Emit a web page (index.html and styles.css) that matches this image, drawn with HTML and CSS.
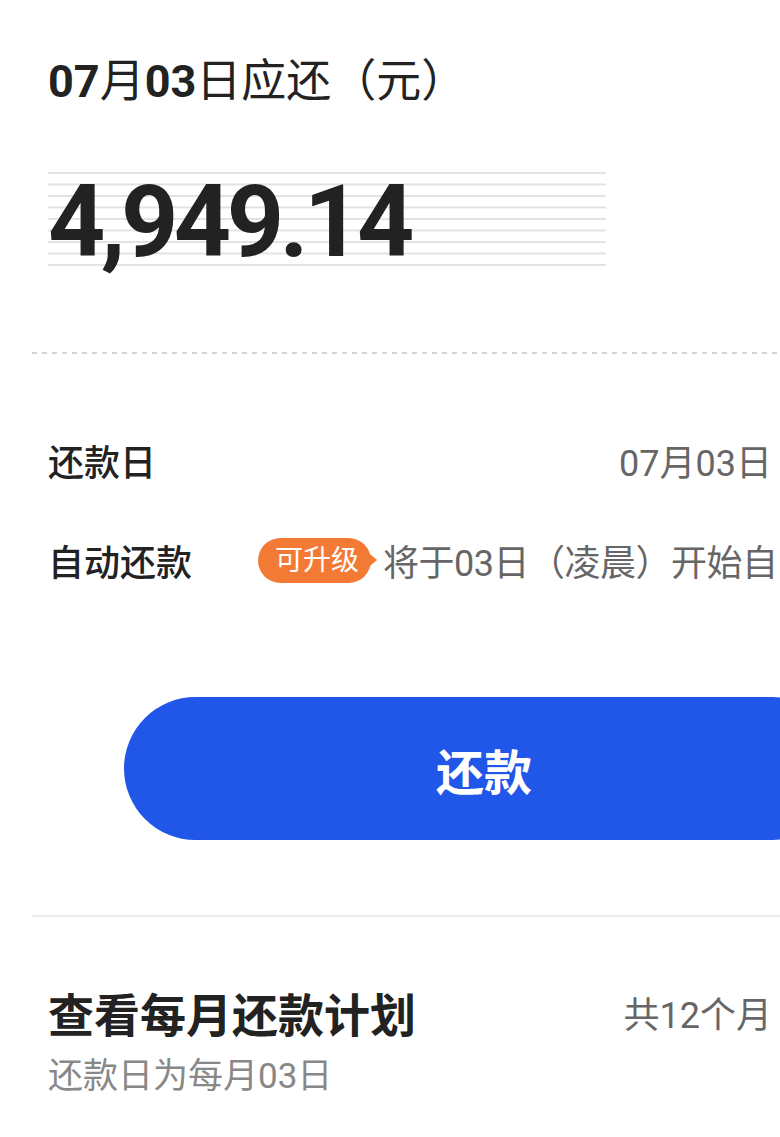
FILE: index.html
```html
<!DOCTYPE html>
<html lang="zh-CN">
<head>
    <meta charset="UTF-8">
    <meta name="viewport" content="width=device-width, initial-scale=1.0">
    <title>还款</title>
    <link rel="stylesheet" href="styles.css">
</head>
<body>
    <div class="sheet">
        <section class="due">
            <h1 class="due-title"><b>07</b>月<b>03</b>日应还（元）</h1>
            <div class="due-amount">4,949.14</div>
        </section>

        <div class="dash"></div>

        <section class="info">
            <div class="info-row">
                <span class="info-label">还款日</span>
                <span class="info-value">07月03日</span>
            </div>
            <div class="info-row">
                <span class="info-label">自动还款</span>
                <span class="tag">可升级</span>
                <span class="auto-text">将于03日（凌晨）开始自</span>
            </div>
        </section>

        <button type="button" class="pay-btn">还款</button>

        <div class="rule"></div>

        <section class="plan">
            <div class="plan-head">
                <span class="plan-title">查看每月还款计划</span>
                <span class="plan-count">共12个月</span>
            </div>
            <div class="plan-note">还款日为每月03日</div>
        </section>
    </div>
</body>
</html>
```

FILE: styles.css
```css
html, body {
    overflow: hidden;
}
body {
    margin: 0;
    background-color: #fff;
    color: #222;
    font-family: Roboto, "Noto Sans CJK SC", sans-serif;
}
.sheet {
    padding: 52px 0 0 32px;
}
.due {
    padding-left: 16px;
}
.due-title {
    margin: 0;
    font-size: 45px;
    line-height: 60px;
    font-weight: 400;
}
.due-title b {
    font-weight: 700;
}
.due-amount {
    margin-top: 60px;
    width: 558px;
    height: 94px;
    line-height: 100px;
    font-size: 100px;
    font-weight: 700;
    letter-spacing: -4.5px;
    background-image: linear-gradient(#e2e2e2 2px, transparent 2px);
    background-size: 100% 11.5px;
}
.dash {
    margin-top: 86px;
    height: 2px;
    background: repeating-linear-gradient(to right, #d4d4d4 0 5px, transparent 5px 10px);
}
.info {
    padding: 76px 0 0 16px;
}
.info-row {
    display: flex;
    align-items: center;
    height: 60px;
    padding-right: 8px;
    font-size: 36px;
    white-space: nowrap;
}
.info-row + .info-row {
    margin-top: 40px;
    padding-right: 0;
}
.info-label {
    width: 210px;
    flex: none;
    font-weight: 500;
}
.info-value {
    margin-left: auto;
    color: #666;
}
.tag {
    position: relative;
    flex: none;
    height: 45px;
    line-height: 45px;
    padding: 0 12px 0 17px;
    border-radius: 23px;
    background-color: #f37a35;
    color: #fff;
    font-size: 28px;
}
.tag::after {
    content: "";
    position: absolute;
    right: -6px;
    top: 50%;
    margin-top: -6px;
    border-left: 7px solid #f37a35;
    border-top: 6px solid transparent;
    border-bottom: 6px solid transparent;
}
.auto-text {
    margin-left: 12px;
    color: #666;
    letter-spacing: -0.5px;
}
.pay-btn {
    display: block;
    margin: 107px 0 0 92px;
    width: 720px;
    height: 143px;
    border: 0;
    border-radius: 72px;
    background-color: #2157e8;
    color: #fff;
    font-family: Roboto, "Noto Sans CJK SC", sans-serif;
    font-size: 48px;
    font-weight: 700;
}
.rule {
    margin-top: 75px;
    height: 2px;
    background-color: #ececec;
}
.plan {
    padding: 65px 8px 0 16px;
}
.plan-head {
    display: flex;
    justify-content: space-between;
    align-items: center;
    height: 60px;
}
.plan-title {
    font-size: 46px;
    font-weight: 700;
}
.plan-count {
    font-size: 36px;
    color: #666;
}
.plan-note {
    margin-top: 13px;
    font-size: 35px;
    line-height: 44px;
    color: #888;
}
```
